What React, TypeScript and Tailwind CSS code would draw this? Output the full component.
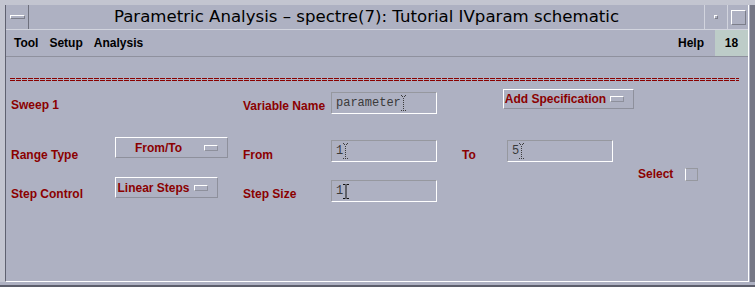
import React from 'react'

const DottedCaret = () => (
  <svg width="5" height="17" viewBox="0 0 5 17" className="shrink-0">
    <g fill="#3c3c3c">
      <rect x="0" y="0" width="1" height="1" />
      <rect x="4" y="0" width="1" height="1" />
      <rect x="1" y="1" width="1" height="1" />
      <rect x="3" y="1" width="1" height="1" />
      {[3, 5, 7, 9, 11, 13].map((y) => (
        <rect key={y} x="2" y={y} width="1" height="1" />
      ))}
      <rect x="0" y="15" width="1" height="1" />
      <rect x="2" y="15" width="1" height="1" />
      <rect x="4" y="15" width="1" height="1" />
    </g>
  </svg>
)

const SolidCaret = () => (
  <svg width="6" height="15" viewBox="0 0 6 15" className="shrink-0">
    <path d="M0 0.5H2.5M3.5 0.5H6M3 1V14M0 14.5H2.5M3.5 14.5H6" stroke="#111" strokeWidth="1" />
  </svg>
)

const Label = ({ children, className }: { children: React.ReactNode; className: string }) => (
  <div className={`text-[12px] leading-[14px] font-bold text-[#8b0000] whitespace-nowrap shrink-0 ${className}`}>
    {children}
  </div>
)

const Field = ({ value, caret }: { value: string; caret: 'dotted' | 'solid' }) => (
  <div className="w-[106px] h-[22px] self-end shrink-0 flex items-center pl-[4px] border border-t-[#96989f] border-l-[#96989f] border-b-white border-r-white">
    <span className="font-['Liberation_Mono',monospace] text-[12px] text-[#3a3a3a] leading-none">{value}</span>
    {caret === 'dotted' ? <DottedCaret /> : <SolidCaret />}
  </div>
)

const Indicator = () => (
  <div className="w-[14px] h-[6px] shrink-0 ml-[3px] mr-[9px] border border-t-white border-l-white border-b-[#8e909c] border-r-[#8e909c]" />
)

const OptionMenu = ({ label, className }: { label: string; className: string }) => (
  <div className={`flex items-center shrink-0 self-start border border-t-white border-l-white border-b-[#8e909c] border-r-[#8e909c] ${className}`}>
    <span className="flex-1 text-center text-[12px] font-bold text-[#8b0000] whitespace-nowrap leading-[14px]">{label}</span>
    <Indicator />
  </div>
)

const dashes = 'bg-[repeating-linear-gradient(to_right,#8b0000_0px,#8b0000_5px,transparent_5px,transparent_6px)]'

export default function App() {
  return (
    <div className="w-[755px] h-[287px] bg-[#aeb1c2] flex flex-col border-b-2 border-b-[#5c5e6b] overflow-hidden font-['Liberation_Sans',Arial,sans-serif]">
      <div className="h-[5px] shrink-0 bg-[#c3c5d0]" />
      <div className="flex flex-1">
        <div className="w-[5px] shrink-0 bg-[#c3c5d0]" />
        <div className="flex-1 flex flex-col border-l border-l-[#5f6170] border-r border-r-white border-b border-b-white">
          {/* title bar */}
          <div className="h-[25px] shrink-0 flex border-b border-b-[#d2d4de]">
            <div className="w-[23px] flex items-center justify-center border-r border-r-[#6e707d]">
              <div className="w-[15px] h-[4px] border border-t-white border-l-white border-b-[#7c7e8a] border-r-[#7c7e8a]" />
            </div>
            <div className="flex-1 flex items-center justify-center font-['DejaVu_Sans',sans-serif] text-[16.6px] text-black whitespace-nowrap">
              Parametric Analysis – spectre(7): Tutorial IVparam schematic
            </div>
            <div className="w-[23px] flex items-center justify-center border-l border-l-[#d2d4de]">
              <div className="w-[4px] h-[4px] border border-t-white border-l-white border-b-[#7c7e8a] border-r-[#7c7e8a]" />
            </div>
            <div className="w-[21px] flex items-center justify-center border-l border-l-[#d2d4de]">
              <div className="w-[15px] h-[15px] border border-t-white border-l-white border-b-[#7c7e8a] border-r-[#7c7e8a]" />
            </div>
          </div>

          {/* menu bar */}
          <div className="h-[27px] shrink-0 flex items-stretch border-b border-b-[#8f919e] text-[12px] font-bold text-black">
            <div className="flex items-center gap-[11px] pl-[8px]">
              <span>Tool</span>
              <span>Setup</span>
              <span>Analysis</span>
            </div>
            <div className="flex-1" />
            <div className="flex items-center">Help</div>
            <div className="w-[33px] ml-[11px] bg-[#bdccc8] flex items-center justify-center">18</div>
          </div>

          {/* form */}
          <div className="flex-1 flex flex-col">
            <div className="mt-[21px] ml-[4px] mr-[9px] flex flex-col gap-px">
              <div className={`h-px ${dashes}`} />
              <div className={`h-px ${dashes}`} />
            </div>

            <div className="mt-[8px] pl-[5px] h-[25px] flex">
              <Label className="w-[232px] self-end pb-[2px]">Sweep 1</Label>
              <Label className="w-[88px] self-end pb-[1px]">Variable Name</Label>
              <Field value="parameter" caret="dotted" />
              <div className="w-[66px] shrink-0" />
              <OptionMenu label="Add Specification" className="w-[131px] h-[20px]" />
            </div>

            <div className="mt-[23px] pl-[5px] flex">
              <div className="flex flex-col">
                <div className="h-[25px] flex">
                  <Label className="w-[104px] self-end">Range Type</Label>
                  <OptionMenu label="From/To" className="w-[113px] h-[21px]" />
                  <div className="w-[15px] shrink-0" />
                  <Label className="w-[88px] self-end">From</Label>
                  <Field value="1" caret="dotted" />
                  <div className="w-[25px] shrink-0" />
                  <Label className="w-[45px] self-end">To</Label>
                  <Field value="5" caret="dotted" />
                </div>
                <div className="mt-[15px] h-[25px] flex">
                  <Label className="w-[104px] self-end pb-[1px]">Step Control</Label>
                  <OptionMenu label="Linear Steps" className="w-[103px] h-[21px]" />
                  <div className="w-[25px] shrink-0" />
                  <Label className="w-[88px] self-end pb-[1px]">Step Size</Label>
                  <Field value="1" caret="solid" />
                </div>
              </div>
              <div className="ml-[25px] pt-[30px] flex items-start gap-[12px]">
                <Label className="">Select</Label>
                <div className="w-[13px] h-[13px] mt-px border border-l-white border-t-[#96989f] border-r-[#96989f] border-b-[#96989f]" />
              </div>
            </div>
          </div>
        </div>
        <div className="w-[6px] shrink-0 bg-[#767886] border-l border-l-[#aeb1c2]" />
      </div>
      <div className="h-[3px] shrink-0 bg-[#aeb1c2]" />
    </div>
  )
}
